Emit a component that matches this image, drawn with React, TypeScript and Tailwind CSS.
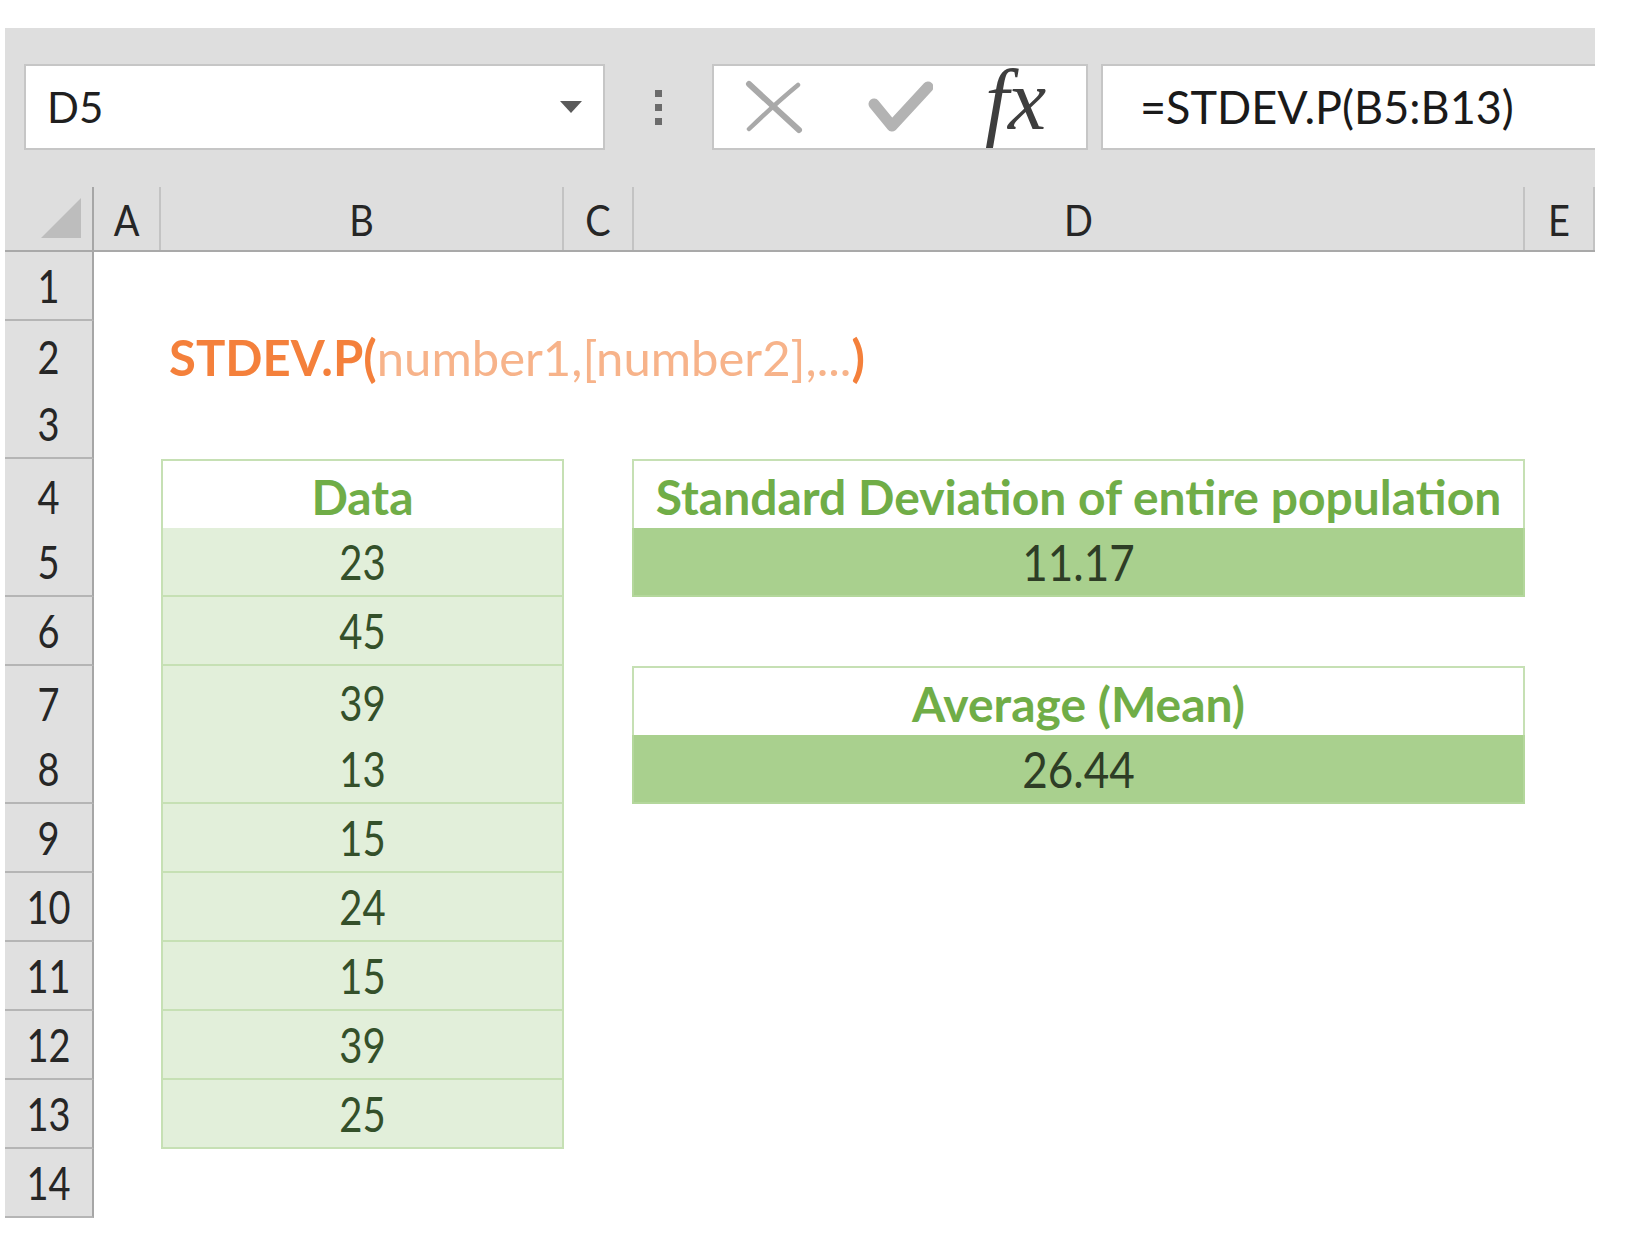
import React from 'react';

const COLS = 'grid grid-cols-[89px_67px_403px_70px_891px_70px]';
const FONT = "font-['Lato','Liberation_Sans',sans-serif]";

const data = [23, 45, 39, 13, 15, 24, 15, 39, 25];

function Tall({ children, className = '' }: { children: React.ReactNode; className?: string }) {
  return <span className={`inline-block whitespace-nowrap ${className}`}>{children}</span>;
}

function XIcon() {
  return (
    <svg width="58" height="54" viewBox="0 0 58 54" fill="none">
      <path d="M4 4 Q 28 26 54 50" stroke="#a9a9a9" strokeWidth="6" strokeLinecap="round" />
      <path d="M53 5 Q 30 24 4 49" stroke="#a9a9a9" strokeWidth="4.5" strokeLinecap="round" />
    </svg>
  );
}

function CheckIcon() {
  return (
    <svg width="65" height="54" viewBox="0 0 65 54" fill="none">
      <path d="M6 24 L24 46 L60 7" stroke="#b3b3b3" strokeWidth="11" strokeLinecap="round" strokeLinejoin="round" />
    </svg>
  );
}

function FormulaBar() {
  return (
    <div className="flex h-[159px] items-start pt-[36px]">
      <div className="ml-[19px] flex h-[86px] w-[581px] items-center justify-between border-2 border-[#c6c6c6] bg-white pl-[21px] pr-[21px]">
        <Tall className="text-[42px] text-[#1f1f1f]">D5</Tall>
        <svg width="22" height="12" viewBox="0 0 22 12">
          <path d="M0 0 H22 L11 12 Z" fill="#5a5a5a" />
        </svg>
      </div>
      <div className="flex h-[86px] w-[107px] flex-col items-center justify-center gap-[7px]">
        <span className="h-[7px] w-[7px] bg-[#6b6b6b]" />
        <span className="h-[7px] w-[7px] bg-[#6b6b6b]" />
        <span className="h-[7px] w-[7px] bg-[#6b6b6b]" />
      </div>
      <div className="flex h-[86px] w-[376px] items-center border-2 border-[#c6c6c6] bg-white pl-[31px]">
        <XIcon />
        <div className="ml-[65px]">
          <CheckIcon />
        </div>
        <span className="ml-[52px] -mt-[14px] font-['Liberation_Serif',serif] text-[86px] italic leading-none tracking-[-1px] text-[#3e3e3e]">
          fx
        </span>
      </div>
      <div className="ml-[13px] flex h-[86px] flex-1 items-center border-y-2 border-l-2 border-[#c6c6c6] bg-white pl-[37px]">
        <Tall className="scale-y-[1.05] text-[45px] text-[#1a1a1a]">=STDEV.P(B5:B13)</Tall>
      </div>
    </div>
  );
}

function ColumnHeaders() {
  const letters = ['A', 'B', 'C', 'D', 'E'];
  return (
    <div className={`${COLS} h-[65px] border-b-2 border-[#a9a9a9]`}>
      <div className="flex items-end justify-end border-r-2 border-[#a6a6a6] pb-[12px] pr-[11px]">
        <svg width="40" height="40" viewBox="0 0 40 40">
          <path d="M40 0 V40 H0 Z" fill="#bdbdbd" />
        </svg>
      </div>
      {letters.map((l) => (
        <div key={l} className="flex items-center justify-center border-r-2 border-[#c3c3c3] pt-[2px]">
          <Tall className="scale-y-[1.12] text-[38px] text-[#262626]">{l}</Tall>
        </div>
      ))}
    </div>
  );
}

function DataCell({ r }: { r: number }) {
  if (r === 2) {
    return (
      <div className="flex items-center pl-[8px]">
        <Tall className="text-[49px]">
          <span className="font-bold text-[#f4803b]">STDEV.P(</span>
          <span className="text-[#f7b38a]">number1,[number2],...</span>
          <span className="font-bold text-[#f4803b]">)</span>
        </Tall>
      </div>
    );
  }
  if (r === 4) {
    return (
      <div className="flex items-center justify-center border-2 border-[#c6e0b4] bg-white">
        <Tall className="text-[48px] font-bold text-[#70ad47]">Data</Tall>
      </div>
    );
  }
  if (r >= 5 && r <= 13) {
    return (
      <div className="flex items-center justify-center border-x-2 border-b-2 border-[#c6e0b4] bg-[#e2efda]">
        <Tall className="scale-y-[1.2] text-[40px] text-[#34502a]">{data[r - 5]}</Tall>
      </div>
    );
  }
  return <div />;
}

function ResultCell({ r }: { r: number }) {
  if (r === 4 || r === 7) {
    return (
      <div className="-ml-[2px] flex items-center justify-center border-2 border-[#c6e0b4] bg-white">
        <Tall className="text-[48px] font-bold text-[#70ad47]">
          {r === 4 ? 'Standard Deviation of entire population' : 'Average (Mean)'}
        </Tall>
      </div>
    );
  }
  if (r === 5 || r === 8) {
    return (
      <div className="-ml-[2px] flex items-center justify-center border-x-2 border-b-2 border-[#b4d79c] bg-[#a9d08e]">
        <Tall className="scale-y-[1.14] text-[44px] text-[#2e3d26]">{r === 5 ? '11.17' : '26.44'}</Tall>
      </div>
    );
  }
  return <div />;
}

export default function App() {
  const rows = Array.from({ length: 14 }, (_, i) => i + 1);
  return (
    <div className={`h-[1259px] w-[1629px] bg-white pl-[5px] pt-[28px] ${FONT}`}>
      <div className="w-[1590px] bg-[#dedede]">
        <FormulaBar />
        <ColumnHeaders />
      </div>
      <div className="w-[1590px]">
        {rows.map((r) => (
          <div key={r} className={`${COLS} h-[69px]`}>
            <div className="flex items-center justify-center border-b-2 border-r-2 border-b-[#b5b5b5] border-r-[#a6a6a6] bg-[#e0e0e0]">
              <Tall className="scale-y-[1.2] text-[38px] text-[#262626]">{r}</Tall>
            </div>
            <div />
            <DataCell r={r} />
            <div />
            <ResultCell r={r} />
            <div />
          </div>
        ))}
      </div>
    </div>
  );
}
